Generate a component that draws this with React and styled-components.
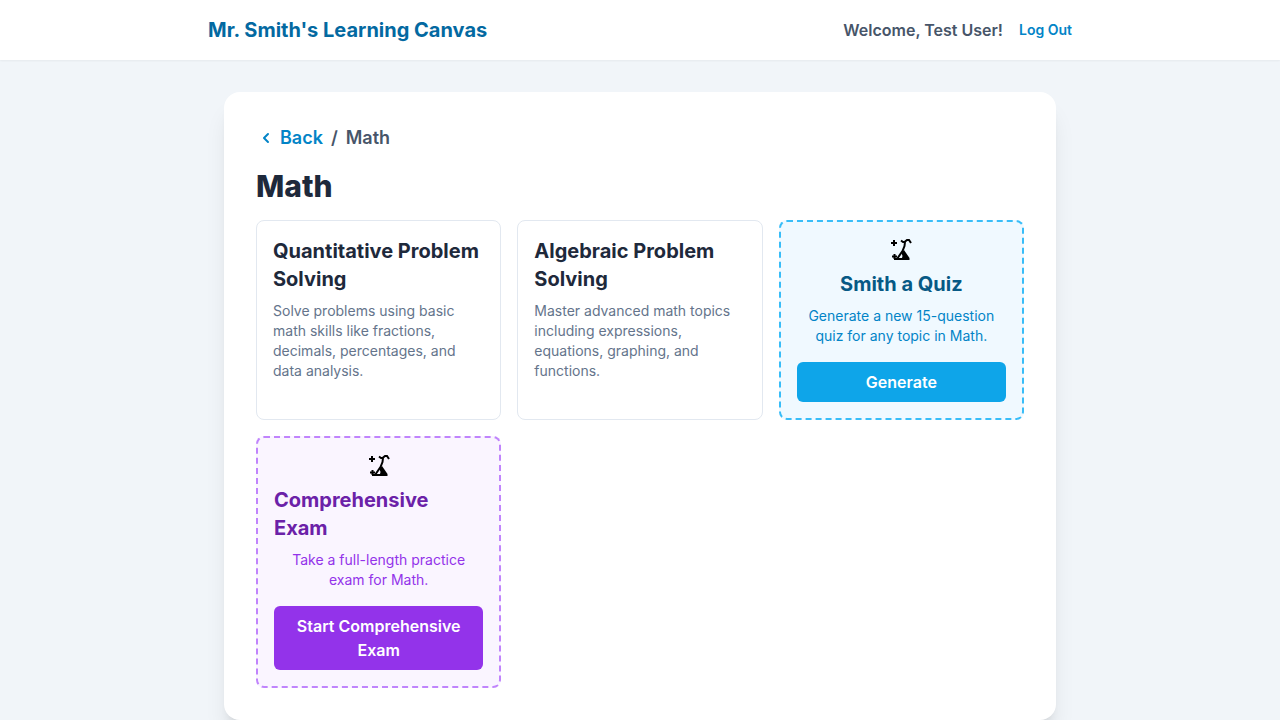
import React from "react";
import styled, { createGlobalStyle } from "styled-components";

const GlobalStyle = createGlobalStyle`
  *, *::before, *::after { box-sizing: border-box; }
  body {
    margin: 0;
    background: #f1f5f9;
    color: #1e293b;
    font-family: Inter, "Liberation Sans", sans-serif;
    font-size: 16px;
    line-height: 24px;
  }
  h1, h2, h3, p { margin: 0; }
  button { font: inherit; border: 0; cursor: pointer; }
`;

const Header = styled.header`
  position: relative;
  background: #fff;
  box-shadow: 0 1px 2px rgba(0, 0, 0, 0.05);
`;

const HeaderInner = styled.div`
  max-width: 896px;
  margin: 0 auto;
  padding: 16px;
  display: flex;
  align-items: center;
  justify-content: space-between;
`;

const Brand = styled.h1`
  font-size: 20px;
  line-height: 28px;
  font-weight: 700;
  color: #0369a1;
`;

const UserArea = styled.div`
  display: flex;
  align-items: center;
  gap: 16px;
`;

const Welcome = styled.span`
  font-weight: 600;
  color: #475569;
`;

const LogOut = styled.button`
  padding: 0;
  background: none;
  font-size: 14px;
  line-height: 20px;
  font-weight: 600;
  color: #0284c7;
`;

const Main = styled.main`
  max-width: 896px;
  margin: 0 auto;
  padding: 32px;
`;

const Panel = styled.section`
  padding: 32px;
  border-radius: 16px;
  background: #fff;
  box-shadow: 0 20px 25px -5px rgba(0, 0, 0, 0.1), 0 8px 10px -6px rgba(0, 0, 0, 0.1);
`;

const Breadcrumb = styled.nav`
  display: flex;
  align-items: center;
  gap: 8px;
  margin-bottom: 16px;
  font-size: 18px;
  line-height: 28px;
  font-weight: 600;
  color: #475569;
`;

const BackLink = styled.a`
  display: flex;
  align-items: center;
  gap: 4px;
  color: #0284c7;
  text-decoration: none;
`;

const Title = styled.h2`
  margin-bottom: 16px;
  font-size: 30px;
  line-height: 36px;
  font-weight: 800;
`;

const Grid = styled.div`
  display: grid;
  grid-template-columns: repeat(auto-fill, minmax(224px, 1fr));
  gap: 16px;
`;

const TopicCard = styled.article`
  padding: 16px;
  border: 1px solid #e2e8f0;
  border-radius: 8px;
`;

const CardTitle = styled.h3`
  font-size: 20px;
  line-height: 28px;
  font-weight: 700;
`;

const CardText = styled.p`
  margin-top: 8px;
  font-size: 14px;
  line-height: 20px;
  color: #64748b;
`;

const tones = {
  sky: { fill: "#f0f9ff", line: "#38bdf8", title: "#075985", text: "#0284c7", button: "#0ea5e9" },
  purple: { fill: "#faf5ff", line: "#c084fc", title: "#6b21a8", text: "#9333ea", button: "#9333ea" },
};

const ActionCard = styled.article`
  display: flex;
  flex-direction: column;
  align-items: center;
  justify-content: center;
  padding: 16px;
  border: 2px dashed ${({ $tone }) => tones[$tone].line};
  border-radius: 8px;
  background: ${({ $tone }) => tones[$tone].fill};

  ${CardTitle} { margin-top: 8px; color: ${({ $tone }) => tones[$tone].title}; }
  ${CardText} { text-align: center; color: ${({ $tone }) => tones[$tone].text}; }
`;

const ActionButton = styled.button`
  width: 100%;
  margin-top: 16px;
  padding: 8px 16px;
  border-radius: 6px;
  background: ${({ $tone }) => tones[$tone].button};
  color: #fff;
  font-weight: 600;
`;

const ChevronLeft = () => (
  <svg width="20" height="20" viewBox="0 0 20 20" fill="currentColor" aria-hidden="true">
    <path
      fillRule="evenodd"
      d="M12.707 5.293a1 1 0 010 1.414L9.414 10l3.293 3.293a1 1 0 01-1.414 1.414l-4-4a1 1 0 010-1.414l4-4a1 1 0 011.414 0z"
    />
  </svg>
);

const FlaskSpark = () => (
  <svg width="24" height="24" viewBox="0 0 24 24" fill="none" stroke="#000" strokeWidth="2" aria-hidden="true">
    <path d="M2 5h6M5 2v6M3 18.500h5M5.500 16v5" />
    <path d="M12 2.500l2 1.500h1.500L18 2h2l2 3M16 4l-.500 4-2 5-5.500 8" />
    <path
      fill="#000"
      stroke="none"
      d="M15 12l5.500 8v2H5v-2h8l.500-2-1-3z"
    />
  </svg>
);

const topics = [
  {
    title: "Quantitative Problem Solving",
    text: "Solve problems using basic math skills like fractions, decimals, percentages, and data analysis.",
  },
  {
    title: "Algebraic Problem Solving",
    text: "Master advanced math topics including expressions, equations, graphing, and functions.",
  },
];

const actions = [
  {
    tone: "sky",
    title: "Smith a Quiz",
    text: "Generate a new 15-question quiz for any topic in Math.",
    button: "Generate",
  },
  {
    tone: "purple",
    title: "Comprehensive Exam",
    text: "Take a full-length practice exam for Math.",
    button: "Start Comprehensive Exam",
  },
];

export default function App() {
  return (
    <>
      <GlobalStyle />
      <Header>
        <HeaderInner>
          <Brand>Mr. Smith's Learning Canvas</Brand>
          <UserArea>
            <Welcome>Welcome, Test User!</Welcome>
            <LogOut type="button">Log Out</LogOut>
          </UserArea>
        </HeaderInner>
      </Header>
      <Main>
        <Panel>
          <Breadcrumb aria-label="Breadcrumb">
            <BackLink href="#">
              <ChevronLeft />
              Back
            </BackLink>
            <span>/</span>
            <span>Math</span>
          </Breadcrumb>
          <Title>Math</Title>
          <Grid>
            {topics.map((t) => (
              <TopicCard key={t.title}>
                <CardTitle>{t.title}</CardTitle>
                <CardText>{t.text}</CardText>
              </TopicCard>
            ))}
            {actions.map((a) => (
              <ActionCard key={a.title} $tone={a.tone}>
                <FlaskSpark />
                <CardTitle>{a.title}</CardTitle>
                <CardText>{a.text}</CardText>
                <ActionButton type="button" $tone={a.tone}>{a.button}</ActionButton>
              </ActionCard>
            ))}
          </Grid>
        </Panel>
      </Main>
    </>
  );
}
